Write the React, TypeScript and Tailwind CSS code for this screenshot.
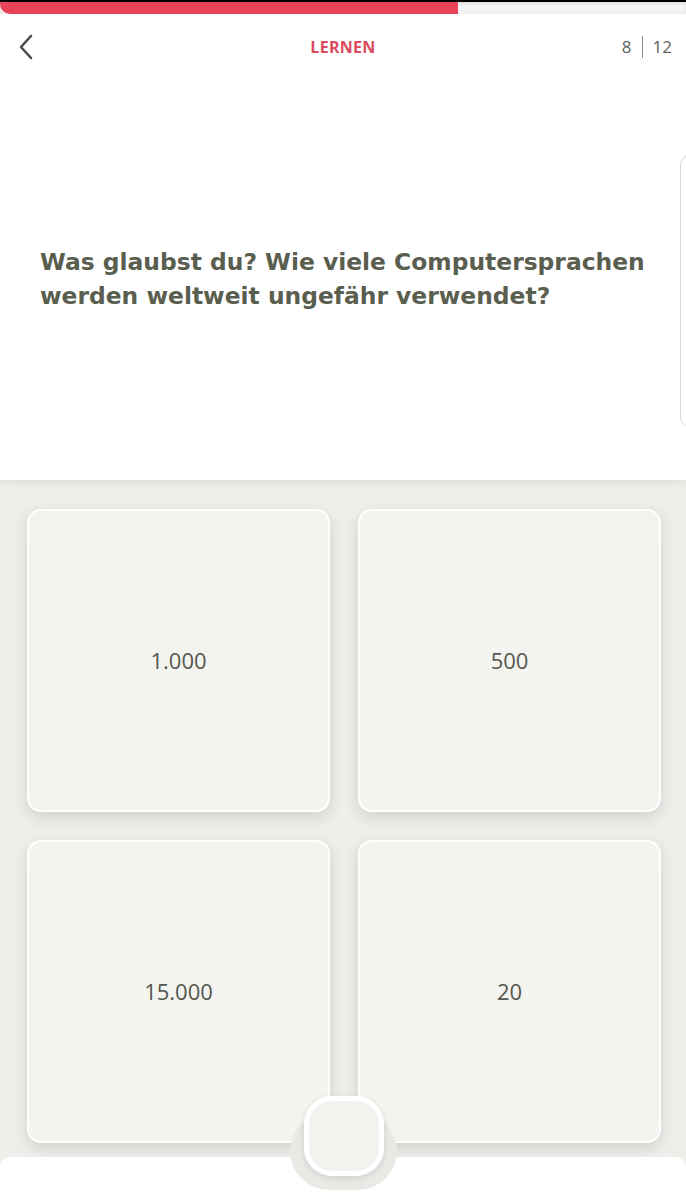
import React from 'react';

const answers = ['1.000', '500', '15.000', '20'];

const AnswerCard: React.FC<{ label: string }> = ({ label }) => (
  <button className="h-[303px] rounded-[14px] border-2 border-white bg-[#f3f4f0] shadow-[0_5px_16px_rgba(0,0,0,0.13)] flex items-center justify-center text-[22px] text-[#55574f] [font-family:'Open_Sans',sans-serif]">
    {label}
  </button>
);

export default function App() {
  return (
    <div className="relative w-[686px] h-[1200px] overflow-hidden bg-[#eeefeb] [font-family:'Open_Sans',sans-serif]">
      {/* progress */}
      <div className="h-[2px] bg-black" />
      <div className="flex h-[12px] bg-[#f4f4f4] shadow-[inset_0_2px_3px_rgba(0,0,0,0.08)]">
        <div className="w-[458px] bg-[#e8435a] rounded-bl-[10px]" />
      </div>

      {/* question panel */}
      <div className="relative bg-white h-[466px] shadow-[0_2px_8px_rgba(0,0,0,0.08)] z-10">
        <div className="grid grid-cols-3 items-center h-[66px] px-[18px]">
          <svg width="16" height="26" viewBox="0 0 16 26" fill="none" stroke="#4b4d48" strokeWidth="2.6" strokeLinecap="round" strokeLinejoin="round">
            <path d="M13 2 L3 13 L13 24" />
          </svg>
          <div className="justify-self-center text-[16px] font-bold tracking-[0.3px] text-[#dc4a5e]">LERNEN</div>
          <div className="justify-self-end flex items-center gap-[10px] text-[17px] text-[#5d5f5a] mr-[-4px]">
            <span>8</span>
            <span className="w-px h-[22px] bg-[#8a8c86]" />
            <span>12</span>
          </div>
        </div>
        <div className="pl-[40px] pr-[10px] pt-[165px]">
          <h1 className="text-[23.4px] leading-[34px] font-bold text-[#595e4f] [font-family:'DejaVu_Sans',sans-serif]">
            Was glaubst du? Wie viele Computersprachen werden weltweit ungefähr verwendet?
          </h1>
        </div>
        <div className="absolute right-[-20px] top-[141px] w-[26px] h-[272px] rounded-[10px] border border-[#d8d8d6] bg-white" />
      </div>

      {/* answers */}
      <div className="grid grid-cols-2 gap-[28px] px-[27px] pt-[29px] w-[688px]">
        {answers.map((a) => (
          <AnswerCard key={a} label={a} />
        ))}
      </div>

      {/* bottom bar with notch */}
      <div className="absolute left-0 right-0 bottom-0 h-[43px] bg-white rounded-t-[10px]" />
      <div className="absolute left-[290px] top-[1112px] w-[107px] h-[78px] rounded-[44px] bg-[#e9eae6]" />
      <div className="absolute left-[304px] top-[1096px] w-[80px] h-[80px] rounded-[28px] border-[5px] border-white bg-[#f2f3ef] shadow-[0_2px_6px_rgba(0,0,0,0.12)]" />
    </div>
  );
}
